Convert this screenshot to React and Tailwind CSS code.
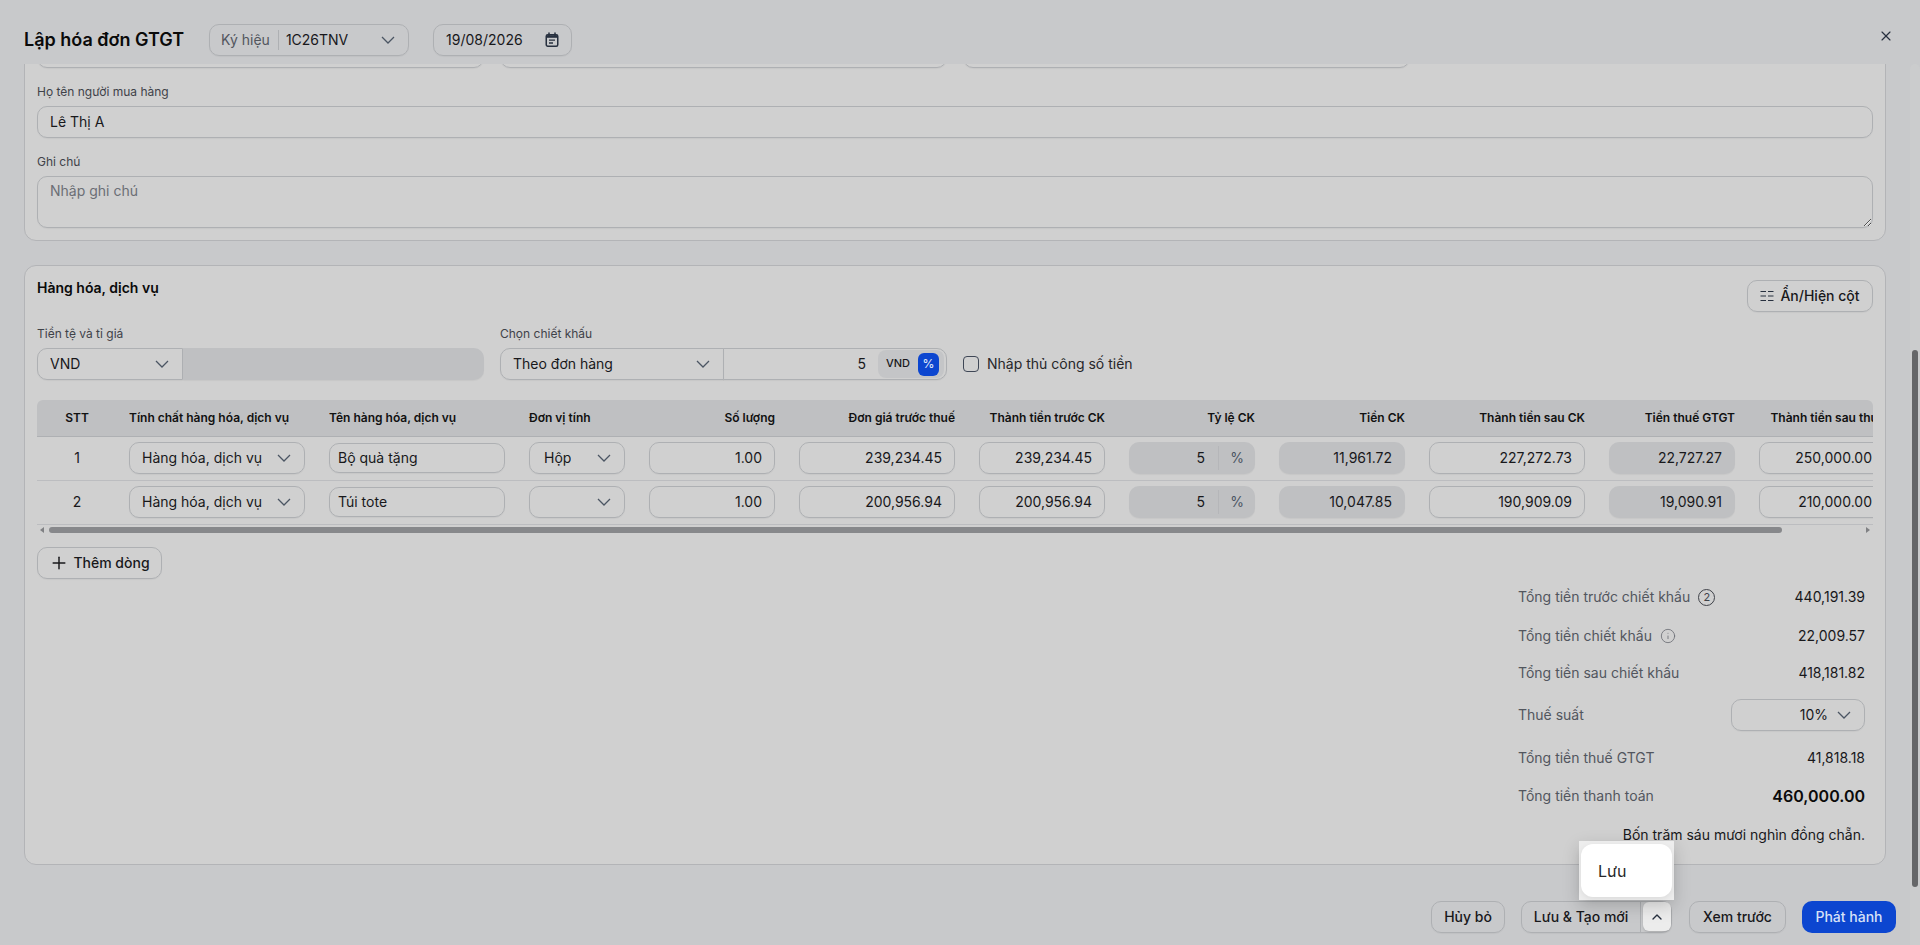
import React from "react";
import { ChevronUp, X, Plus, Info } from "lucide-react";

const box = "border border-[#aeb0b3] rounded-[10px] shadow-[0_1px_1px_rgba(0,0,0,0.04)]";

function Chevron() {
  return (
    <svg width="16" height="16" viewBox="0 0 16 16" fill="none" stroke="#4b5563" strokeWidth="1.25" className="shrink-0">
      <path d="M2 5l6 6 6-6" />
    </svg>
  );
}

function Sel({ value, className = "", pl = "pl-3", pr = "pr-[12px]" }) {
  return (
    <div className={`${box} h-8 flex items-center justify-between ${pl} ${pr} text-sm text-[#18181b] ${className}`}>
      <span className="truncate">{value}</span>
      <Chevron />
    </div>
  );
}

function Num({ value }) {
  return (
    <div className={`${box} h-8 flex items-center justify-end pr-3 text-sm text-[#18181b]`}>{value}</div>
  );
}

function Disabled({ value }) {
  return (
    <div className="h-8 rounded-[10px] bg-[#bfc0c2] flex items-center justify-end pr-[13px] text-sm text-[#18181b] shadow-[0_1px_1px_rgba(0,0,0,0.04)]">
      {value}
    </div>
  );
}

function Rate() {
  return (
    <div className="h-8 rounded-[10px] bg-[#bfc0c2] flex items-center text-sm text-[#18181b] shadow-[0_1px_1px_rgba(0,0,0,0.04)]">
      <span className="w-[76px] text-right">5</span>
      <span className="ml-[13px] h-6 border-l border-[#b5b6b9]" />
      <span className="flex-1 text-center text-[#4b5563]">%</span>
    </div>
  );
}

function CalendarIcon() {
  return (
    <svg width="16" height="16" viewBox="0 0 16 16" fill="none" className="text-[#27303f]">
      <path d="M5 1v2.5M11 1v2.5" stroke="currentColor" strokeWidth="1.5" strokeLinecap="round" />
      <rect x="2.25" y="2.75" width="11.5" height="11.5" rx="1.5" stroke="currentColor" strokeWidth="1.5" />
      <path d="M2.5 3.2h11v2.6h-11z" fill="currentColor" />
      <path d="M5 8.2h6M5 11h4" stroke="currentColor" strokeWidth="1.3" />
    </svg>
  );
}

function ColumnsIcon() {
  return (
    <svg width="14" height="12" viewBox="0 0 14 12" fill="none" stroke="#27303f" strokeWidth="1">
      <path d="M0.5 1.5h5.5M0.5 6h5.5M0.5 10.5h5.5M8 1.5h5.5M8 6h5.5M8 10.5h5.5" />
    </svg>
  );
}

const cols = [80, 200, 200, 120, 150, 180, 150, 150, 150, 180, 150, 150];
const headers = [
  ["STT", "text-center"],
  ["Tính chất hàng hóa, dịch vụ", "text-left"],
  ["Tên hàng hóa, dịch vụ", "text-left"],
  ["Đơn vị tính", "text-left"],
  ["Số lượng", "text-right"],
  ["Đơn giá trước thuế", "text-right"],
  ["Thành tiền trước CK", "text-right"],
  ["Tỷ lệ CK", "text-right"],
  ["Tiền CK", "text-right"],
  ["Thành tiền sau CK", "text-right"],
  ["Tiền thuế GTGT", "text-right"],
  ["Thành tiền sau thuế", "text-right"],
];
const rows = [
  { n: "1", name: "Bộ quà tặng", unit: "Hộp", price: "239,234.45", ck: "11,961.72", after: "227,272.73", tax: "22,727.27", total: "250,000.00" },
  { n: "2", name: "Túi tote", unit: "", price: "200,956.94", ck: "10,047.85", after: "190,909.09", tax: "19,090.91", total: "210,000.00" },
];

function Row({ label, children, h }) {
  return (
    <div className={`flex items-center justify-between ${h}`}>
      <div className="flex items-center text-sm text-[#52565e]">{label}</div>
      {children}
    </div>
  );
}

function Btn({ children, className = "" }) {
  return (
    <button className={`${box} h-8 flex items-center justify-center text-sm font-medium text-[#18181b] ${className}`}>
      {children}
    </button>
  );
}

export default function App() {
  return (
    <div className="h-[945px] flex flex-col overflow-hidden bg-[#c8c9cb] text-[#18181b] font-['Inter',sans-serif]">
      <header className="h-16 shrink-0 flex items-start justify-between pl-6 pr-[26px] pt-6">
        <div className="flex items-center h-8">
          <h1 className="text-lg font-semibold text-[#0a0a0a]">Lập hóa đơn GTGT</h1>
          <div className={`${box} ml-[25px] w-[200px] h-8 flex items-center pl-[11px] pr-3 text-sm`}>
            <span className="text-[#52565e]">Ký hiệu</span>
            <span className="ml-2 mr-[7px] h-[20px] border-l border-[#aeb0b3]" />
            <span className="flex-1">1C26TNV</span>
            <Chevron />
          </div>
          <div className={`${box} ml-6 w-[139px] h-8 flex items-center justify-between pl-3 pr-[11px] text-sm`}>
            <span>19/08/2026</span>
            <CalendarIcon />
          </div>
        </div>
        <X size={16} strokeWidth={1.75} className="mt-1 text-[#27303f]" />
      </header>

      <div className="flex-1 min-h-0 flex">
        <div className="flex-1 min-w-0 overflow-hidden">
          <div className="pl-6 pr-6">
            <section className="-mt-[41px] border border-[#b3b4b7] rounded-xl bg-[#d0d0d0] p-3">
              <div className="grid grid-cols-4 gap-4">
                <div className={`${box} h-8`} />
                <div className={`${box} h-8`} />
                <div className={`${box} h-8`} />
              </div>
              <label className="block mt-4 mb-1.5 text-xs leading-4 text-[#3f4249]">Họ tên người mua hàng</label>
              <div className={`${box} h-8 flex items-center px-3 text-sm`}>Lê Thị A</div>
              <label className="block mt-4 mb-1.5 text-xs leading-4 text-[#3f4249]">Ghi chú</label>
              <textarea
                placeholder="Nhập ghi chú"
                className={`${box} block w-full h-[52px] px-3 py-1 text-sm outline-none placeholder:text-[#6b6e75]`}
              />
            </section>

            <section className="mt-6 border border-[#b3b4b7] rounded-xl bg-[#d0d0d0] px-3 pt-3 pb-[10px]">
              <div className="flex items-start justify-between">
                <h2 className="text-sm leading-5 font-semibold text-[#0a0a0a]">Hàng hóa, dịch vụ</h2>
                <Btn className="mt-0.5 w-[126px] gap-1.5">
                  <ColumnsIcon />
                  Ẩn/Hiện cột
                </Btn>
              </div>

              <div className="grid grid-cols-4 gap-4 mt-[14px]">
                <div>
                  <label className="block mb-[6px] text-xs leading-4 text-[#3f4249]">Tiền tệ và tỉ giá</label>
                  <div className="flex h-8">
                    <Sel value="VND" className="w-[146px] rounded-r-none" />
                    <div className="flex-1 bg-[#bfc0c2] rounded-r-[10px] shadow-[0_1px_1px_rgba(0,0,0,0.04)]" />
                  </div>
                </div>
                <div>
                  <label className="block mb-[6px] text-xs leading-4 text-[#3f4249]">Chọn chiết khấu</label>
                  <div className="flex h-8">
                    <Sel value="Theo đơn hàng" className="w-[224px] rounded-r-none" />
                    <div className={`${box} flex-1 -ml-px rounded-l-none flex items-center justify-end pr-[2px] text-sm`}>
                      <span className="mr-[12px]">5</span>
                      <div className="w-[66px] h-[28px] bg-[#c4c5c7] rounded-lg flex items-center justify-end pr-[5px] text-[11px] font-medium">
                        <span className="mr-[8px]">VND</span>
                        <span className="w-[21px] h-[23px] rounded-md bg-[#0c46d0] text-[#dbe4f8] text-xs flex items-center justify-center">%</span>
                      </div>
                    </div>
                  </div>
                </div>
                <div className="pt-[22px]">
                  <div className="flex items-center h-8 gap-2 text-sm text-[#27272a]">
                    <span className="w-4 h-4 rounded-[4px] border border-[#3f4756]" />
                    Nhập thủ công số tiền
                  </div>
                </div>
              </div>

              <div className="mt-5 overflow-hidden rounded-t-md">
                <table className="table-fixed w-[1860px] text-sm">
                  <colgroup>
                    {cols.map((w, i) => (
                      <col key={i} style={{ width: w }} />
                    ))}
                  </colgroup>
                  <thead>
                    <tr className="bg-[#bfc0c2] border-b border-[#aeb0b3]">
                      {headers.map(([t, a]) => (
                        <th key={t} className={`h-9 px-3 text-xs font-semibold text-[#111] whitespace-nowrap ${a}`}>
                          {t}
                        </th>
                      ))}
                    </tr>
                  </thead>
                  <tbody>
                    {rows.map((r) => (
                      <tr key={r.n} className="border-b border-[#bcbdc0]">
                        <td className="h-11 px-3 text-center">{r.n}</td>
                        <td className="px-3"><Sel value="Hàng hóa, dịch vụ" pl="pl-[12px]" pr="pr-3" /></td>
                        <td className="px-3">
                          <div className={`${box} h-[30px] flex items-center px-2 text-sm`}>{r.name}</div>
                        </td>
                        <td className="px-3"><Sel value={r.unit} pl="pl-[14px]" pr="pr-3" /></td>
                        <td className="px-3"><Num value="1.00" /></td>
                        <td className="px-3"><Num value={r.price} /></td>
                        <td className="px-3"><Num value={r.price} /></td>
                        <td className="px-3"><Rate /></td>
                        <td className="px-3"><Disabled value={r.ck} /></td>
                        <td className="px-3"><Num value={r.after} /></td>
                        <td className="px-3"><Disabled value={r.tax} /></td>
                        <td className="px-3"><Num value={r.total} /></td>
                      </tr>
                    ))}
                  </tbody>
                </table>
              </div>
              <div className="mt-px h-[8px] flex items-center">
                <svg width="12" height="8" viewBox="0 0 12 8" className="shrink-0"><path d="M7 1L3 4l4 3z" fill="#7f8083" /></svg>
                <div className="w-[1733px] h-[6px] rounded-full bg-[#87888b]" />
                <svg width="12" height="8" viewBox="0 0 12 8" className="shrink-0 ml-auto"><path d="M5 1l4 3-4 3z" fill="#7f8083" /></svg>
              </div>

              <Btn className="mt-[13px] w-[125px] gap-1">
                <Plus size={20} strokeWidth={1.75} />
                Thêm dòng
              </Btn>

              <div className="ml-auto mr-2 w-[347px]">
                <Row h="h-[37px]" label={<>Tổng tiền trước chiết khấu<span className="ml-2 w-[17px] h-[17px] rounded-full border border-[#3f4249] text-[11px] leading-none flex items-center justify-center text-[#3f4249]">2</span></>}>
                  <span className="text-sm">440,191.39</span>
                </Row>
                <Row h="h-10" label={<>Tổng tiền chiết khấu<Info size={16} strokeWidth={1.25} className="ml-2 text-[#6b6e75]" /></>}>
                  <span className="text-sm">22,009.57</span>
                </Row>
                <Row h="h-[34px]" label="Tổng tiền sau chiết khấu">
                  <span className="text-sm">418,181.82</span>
                </Row>
                <Row h="h-[50px]" label="Thuế suất">
                  <div className={`${box} w-[134px] h-8 flex items-center justify-end gap-2 pr-3 text-sm`}>
                    10%
                    <Chevron />
                  </div>
                </Row>
                <Row h="h-9" label="Tổng tiền thuế GTGT">
                  <span className="text-sm">41,818.18</span>
                </Row>
                <Row h="h-10" label="Tổng tiền thanh toán">
                  <span className="text-base font-semibold text-[#0a0a0a]">460,000.00</span>
                </Row>
                <div className="h-[38px] flex items-center justify-end text-sm text-[#18181b]">Bốn trăm sáu mươi nghìn đồng chẵn.</div>
              </div>
            </section>
          </div>

          <footer className="mt-9 pr-[14px] flex justify-end items-center">
            <Btn className="w-[74px]">Hủy bỏ</Btn>
            <div className={`${box} relative ml-4 w-[151px] h-8 flex items-center text-sm font-medium`}>
              <span className="w-[120px] h-full flex items-center justify-center border-r border-[#aeb0b3]">Lưu &amp; Tạo mới</span>
              <span className="ml-[2px] w-[28px] h-[29px] rounded-md bg-[#ececec] shadow-[0_1px_2px_rgba(0,0,0,0.15)] flex items-center justify-center">
                <ChevronUp size={16} strokeWidth={2} className="text-[#27303f]" />
              </span>
              <div className="absolute right-[-3px] bottom-[32px] w-[95px] h-[59px] px-[2px] pt-[3px] pb-[3px] bg-[#ededed] shadow-[0_6px_16px_rgba(0,0,0,0.18)]">
                <div className="h-full rounded-xl bg-white flex items-center pl-[17px] pt-0.5 text-base font-normal text-[#27272a] shadow-[0_2px_6px_rgba(0,0,0,0.08)]">Lưu</div>
              </div>
            </div>
            <Btn className="ml-[17px] w-[97px]">Xem trước</Btn>
            <button className="ml-4 w-[94px] h-8 rounded-[10px] bg-[#0c46d0] text-[#d7e1f7] text-sm font-medium">Phát hành</button>
          </footer>
        </div>

        <aside className="w-[10px] shrink-0 bg-[#cbcccd] rounded-t-md pt-[286px] pl-[2px] pr-[2px]">
          <div className="h-[537px] rounded-full bg-[#666769]" />
        </aside>
      </div>
    </div>
  );
}
